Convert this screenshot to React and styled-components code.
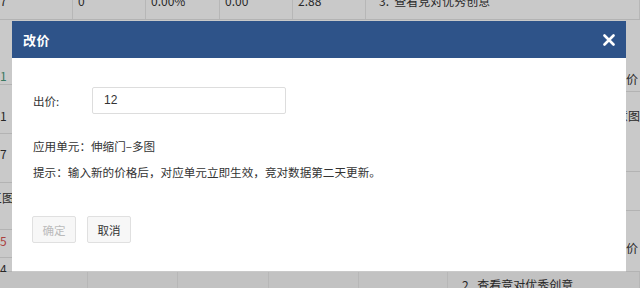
import React from "react"
import styled, { createGlobalStyle } from "styled-components"

const Global = createGlobalStyle`
	html, body {
		margin: 0;
		padding: 0;
		background: #ffffff;
	}
	body {
		font-family: "Noto Sans CJK SC", "Noto Sans", sans-serif;
	}
`

const Page = styled.div`
	position: relative;
	width: 640px;
	height: 288px;
	overflow: hidden;
	background: #ffffff;
	color: #333333;
	font-size: 12px;
`

const Table = styled.div`
	display: flex;
	flex-direction: column;
	margin-top: -13px;
`

const Row = styled.div`
	display: grid;
	grid-template-columns: ${ props => props.cols };
	height: ${ props => props.h }px;
	border-bottom: 1px solid #e4e4e4;
	background: ${ props => props.shade ? "#f6f6f6" : "#ffffff" };
`

const Cell = styled.div`
	border-right: 1px solid #e8e8e8;
	padding: ${ props => props.pad || "0 0 0 5px" };
	line-height: ${ props => props.lh || 28 }px;
	color: ${ props => props.color || "#333333" };
	white-space: nowrap;
	overflow: hidden;
`

const Middle = styled.div`
	display: flex;
	height: ${ props => props.h }px;
`

const Strip = styled.div`
	display: flex;
	flex-direction: column;
	width: ${ props => props.w }px;
	flex: none;
`

const StripCell = styled.div`
	height: ${ props => props.h }px;
	border-bottom: 1px solid #e4e4e4;
	box-sizing: border-box;
	padding-top: ${ props => props.pt || 0 }px;
	margin-right: ${ props => -(props.shift || 0) }px;
	text-align: ${ props => props.align || "left" };
	line-height: 17px;
	color: ${ props => props.color || "#333333" };
	white-space: nowrap;
	font-size: 12px;
	direction: ${ props => props.align === "right" ? "rtl" : "ltr" };
`

const Fill = styled.div`
	flex: 1;
`

const Overlay = styled.div`
	position: absolute;
	inset: 0;
	background: rgba(0, 0, 0, 0.21);
`

const Dialog = styled.div`
	position: absolute;
	left: 12px;
	top: 21px;
	width: 614px;
	height: 250px;
	background: #ffffff;
	display: flex;
	flex-direction: column;
`

const Header = styled.div`
	height: 37px;
	background: #2e5389;
	display: flex;
	align-items: center;
	justify-content: space-between;
	padding: 0 11px 0 11px;
	color: #ffffff;
`

const Title = styled.div`
	font-size: 13px;
	font-weight: bold;
	letter-spacing: 0.5px;
`

const Close = styled.svg`
	width: 12px;
	height: 12px;
	display: block;
`

const Body = styled.div`
	padding: 29px 20px 0 21px;
	display: flex;
	flex-direction: column;
`

const Field = styled.div`
	display: flex;
	align-items: center;
`

const Label = styled.div`
	width: 59px;
	font-size: 11.5px;
	color: #333333;
`

const Input = styled.div`
	width: 194px;
	height: 27px;
	box-sizing: border-box;
	border: 1px solid #dddddd;
	border-radius: 2px;
	padding-left: 11px;
	line-height: 25px;
	font-size: 12px;
	font-family: "Liberation Sans", "Noto Sans CJK SC", sans-serif;
	color: #333333;
`

const Line = styled.div`
	font-size: 11.6px;
	color: #333333;
	margin-top: ${ props => props.mt }px;
	line-height: 16px;
	white-space: nowrap;
`

const Actions = styled.div`
	display: flex;
	gap: 11px;
	margin-top: 36px;
	padding-left: 20px;
`

const Button = styled.div`
	width: 44px;
	height: 27px;
	box-sizing: border-box;
	border: 1px solid #e0e0e0;
	border-radius: 2px;
	background: #f7f7f7;
	display: flex;
	align-items: center;
	justify-content: center;
	font-size: 11.5px;
	color: ${ props => props.disabled ? "#bbbbbb" : "#333333" };
`

const topCols = "73px 73px 74px 73px 73px 1fr"
const bottomCols = "88px 90px 91px 90px 89px 1fr"

export default function App() {
	return <Page>
		<Global />
		<Table>
			<Row h={ 32 } cols={ topCols }>
				<Cell pad="0">7</Cell>
				<Cell>0</Cell>
				<Cell>0.00%</Cell>
				<Cell>0.00</Cell>
				<Cell>2.88</Cell>
				<Cell pad="0 0 0 13px">3.&nbsp;&nbsp;查看竞对优秀创意</Cell>
			</Row>
			<Middle h={ 252 }>
				<Strip w={ 12 }>
					<StripCell h={ 65 } pt={ 46.5 } color="#4a9a7a">1</StripCell>
					<StripCell h={ 49 } pt={ 21.5 }>1</StripCell>
					<StripCell h={ 49 } pt={ 10.5 }>7</StripCell>
					<StripCell h={ 47 } pt={ 5.5 } align="right" shift={ 2 }>三图</StripCell>
					<StripCell h={ 28 } pt={ 1.5 } color="#d9534f">5</StripCell>
					<StripCell h={ 14 } pt={ 1.5 }>4</StripCell>
				</Strip>
				<Fill />
				<Strip w={ 14 }>
					<StripCell h={ 72 } pt={ 49.5 }>价</StripCell>
					<StripCell h={ 80 } pt={ 14.5 } align="right">意图</StripCell>
					<StripCell h={ 39 } />
					<StripCell h={ 61 } pt={ 27.5 }>价</StripCell>
				</Strip>
			</Middle>
			<Row h={ 28 } cols={ bottomCols } shade>
				<Cell />
				<Cell />
				<Cell />
				<Cell />
				<Cell />
				<Cell pad="0 0 0 14px" lh={ 26 }>2.&nbsp;&nbsp;查看竞对优秀创意</Cell>
			</Row>
		</Table>
		<Overlay />
		<Dialog>
			<Header>
				<Title>改价</Title>
				<Close viewBox="0 0 12 12">
					<path d="M1.5 1.5 L10.5 10.5 M10.5 1.5 L1.5 10.5" stroke="#ffffff" strokeWidth="2.6" strokeLinecap="round" />
				</Close>
			</Header>
			<Body>
				<Field>
					<Label>出价:</Label>
					<Input>12</Input>
				</Field>
				<Line mt={ 24 }>应用单元：伸缩门–多图</Line>
				<Line mt={ 10 }>提示：输入新的价格后，对应单元立即生效，竞对数据第二天更新。</Line>
			</Body>
			<Actions>
				<Button disabled>确定</Button>
				<Button>取消</Button>
			</Actions>
		</Dialog>
	</Page>
}
